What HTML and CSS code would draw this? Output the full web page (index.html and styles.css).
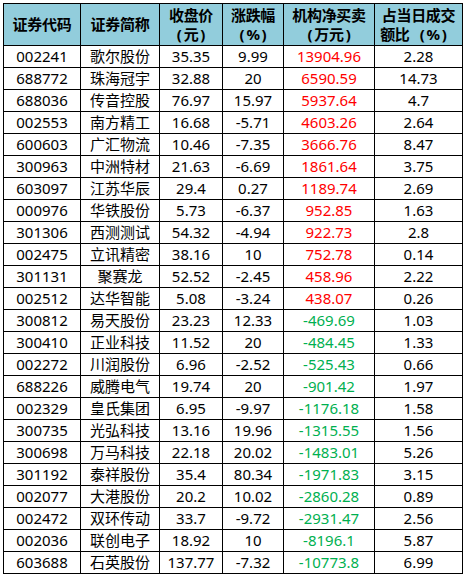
FILE: index.html
```html
<!DOCTYPE html>
<html lang="zh-CN">
<head>
    <meta charset="UTF-8">
    <title>机构净买卖</title>
    <link rel="stylesheet" href="styles.css">
</head>
<body>
    <table class="sheet">
        <colgroup>
            <col class="c-code">
            <col class="c-name">
            <col class="c-price">
            <col class="c-chg">
            <col class="c-net">
            <col class="c-ratio">
        </colgroup>
        <thead>
            <tr>
                <th>证券代码</th>
                <th>证券简称</th>
                <th>收盘价<br><span class="po">(</span>元<span class="pc">)</span></th>
                <th>涨跌幅<br><span class="po">(</span>%<span class="pc">)</span></th>
                <th>机构净买卖<br><span class="po">(</span>万元<span class="pc">)</span></th>
                <th>占当日成交<br>额比<span class="po">(</span>%<span class="pc">)</span></th>
            </tr>
        </thead>
        <tbody>
            <tr><td>002241</td><td>歌尔股份</td><td>35.35</td><td>9.99</td><td class="up">13904.96</td><td>2.28</td></tr>
            <tr><td>688772</td><td>珠海冠宇</td><td>32.88</td><td>20</td><td class="up">6590.59</td><td>14.73</td></tr>
            <tr><td>688036</td><td>传音控股</td><td>76.97</td><td>15.97</td><td class="up">5937.64</td><td>4.7</td></tr>
            <tr><td>002553</td><td>南方精工</td><td>16.68</td><td>-5.71</td><td class="up">4603.26</td><td>2.64</td></tr>
            <tr><td>600603</td><td>广汇物流</td><td>10.46</td><td>-7.35</td><td class="up">3666.76</td><td>8.47</td></tr>
            <tr><td>300963</td><td>中洲特材</td><td>21.63</td><td>-6.69</td><td class="up">1861.64</td><td>3.75</td></tr>
            <tr><td>603097</td><td>江苏华辰</td><td>29.4</td><td>0.27</td><td class="up">1189.74</td><td>2.69</td></tr>
            <tr><td>000976</td><td>华铁股份</td><td>5.73</td><td>-6.37</td><td class="up">952.85</td><td>1.63</td></tr>
            <tr><td>301306</td><td>西测测试</td><td>54.32</td><td>-4.94</td><td class="up">922.73</td><td>2.8</td></tr>
            <tr><td>002475</td><td>立讯精密</td><td>38.16</td><td>10</td><td class="up">752.78</td><td>0.14</td></tr>
            <tr><td>301131</td><td>聚赛龙</td><td>52.52</td><td>-2.45</td><td class="up">458.96</td><td>2.22</td></tr>
            <tr><td>002512</td><td>达华智能</td><td>5.08</td><td>-3.24</td><td class="up">438.07</td><td>0.26</td></tr>
            <tr><td>300812</td><td>易天股份</td><td>23.23</td><td>12.33</td><td class="down">-469.69</td><td>1.03</td></tr>
            <tr><td>300410</td><td>正业科技</td><td>11.52</td><td>20</td><td class="down">-484.45</td><td>1.33</td></tr>
            <tr><td>002272</td><td>川润股份</td><td>6.96</td><td>-2.52</td><td class="down">-525.43</td><td>0.66</td></tr>
            <tr><td>688226</td><td>威腾电气</td><td>19.74</td><td>20</td><td class="down">-901.42</td><td>1.97</td></tr>
            <tr><td>002329</td><td>皇氏集团</td><td>6.95</td><td>-9.97</td><td class="down">-1176.18</td><td>1.58</td></tr>
            <tr><td>300735</td><td>光弘科技</td><td>13.16</td><td>19.96</td><td class="down">-1315.55</td><td>1.56</td></tr>
            <tr><td>300698</td><td>万马科技</td><td>22.18</td><td>20.02</td><td class="down">-1483.01</td><td>5.26</td></tr>
            <tr><td>301192</td><td>泰祥股份</td><td>35.4</td><td>80.34</td><td class="down">-1971.83</td><td>3.15</td></tr>
            <tr><td>002077</td><td>大港股份</td><td>20.2</td><td>10.02</td><td class="down">-2860.28</td><td>0.89</td></tr>
            <tr><td>002472</td><td>双环传动</td><td>33.7</td><td>-9.72</td><td class="down">-2931.47</td><td>2.56</td></tr>
            <tr><td>002036</td><td>联创电子</td><td>18.92</td><td>10</td><td class="down">-8196.1</td><td>5.87</td></tr>
            <tr><td>603688</td><td>石英股份</td><td>137.77</td><td>-7.32</td><td class="down">-10773.8</td><td>6.99</td></tr>
        </tbody>
    </table>
</body>
</html>
```

FILE: styles.css
```css
body {
    margin: 0;
    padding: 3px;
    background-color: #ffffff;
    font-family: "Noto Sans", "Noto Sans CJK SC", sans-serif;
    font-size: 15px;
    color: #000000;
}

.sheet {
    border-collapse: collapse;
    table-layout: fixed;
    width: 459px;
}

.c-code { width: 77px; }
.c-name { width: 79px; }
.c-price { width: 63px; }
.c-chg { width: 61px; }
.c-net { width: 91px; }
.c-ratio { width: 88px; }

.sheet th,
.sheet td {
    border: 1px solid #000000;
    padding: 0;
    text-align: center;
    white-space: nowrap;
    overflow: hidden;
}

.sheet th {
    height: 41px;
    background-color: #92cddc;
    font-weight: bold;
    line-height: 19px;
    letter-spacing: -0.3px;
}

/* full-width brackets, as in the sheet */
.po,
.pc {
    display: inline-block;
    width: 15px;
}

.po {
    text-align: right;
    padding-right: 2px;
}

.pc {
    text-align: left;
    padding-left: 2px;
}

.sheet td {
    height: 21px;
    line-height: 21px;
}

.up {
    color: #ff0000;
}

.down {
    color: #00b050;
}
```
